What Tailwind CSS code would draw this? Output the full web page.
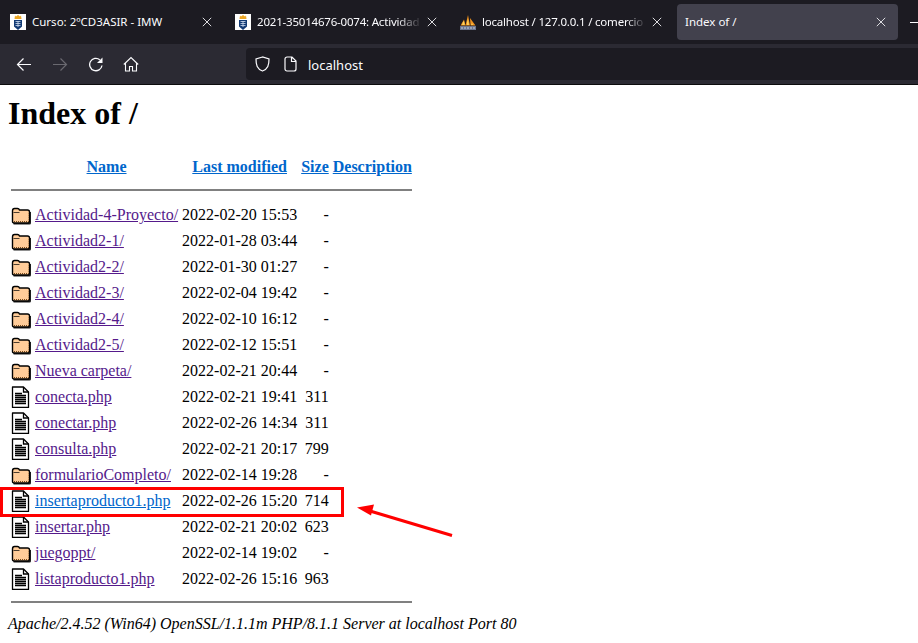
<!DOCTYPE html>
<html lang="en">
<head>
    <meta charset="UTF-8">
    <title>Index of /</title>
    <script src="https://cdn.jsdelivr.net/npm/@tailwindcss/browser@4"></script>
</head>
<body class="relative w-[918px] h-[643px] overflow-hidden bg-white font-['Liberation_Serif',serif] text-black text-[16px]">
    <!-- Shared icons -->
    <svg class="hidden">
        <symbol id="folder" viewBox="0 0 20 22">
            <path d="M2.500 20.500h16q1.500 0 1.500-1.500V8h-1.500v10.500q0 .5-.5.500h-15.500z" fill="#222"/>
            <path d="M1.500 7q0-2.500 2-2.500h3q1.500 0 2 1.500h8q2 0 2 2v9.500q0 1.500-1.500 1.500H3q-1.500 0-1.500-1.500z" fill="#ffcc99" stroke="#000" stroke-width="1.400"/>
            <path d="M2.500 8.500h6" stroke="#000" stroke-width=".7"/>
            <path d="M3 17.500h15" stroke="#7a4a1a" stroke-width="1.200" stroke-dasharray="1 1"/>
            <path d="M17.500 9v8" stroke="#b98a56" stroke-width="1" stroke-dasharray="1 1"/>
        </symbol>
        <symbol id="file" viewBox="0 0 20 22">
            <path d="M1.500 1h11l5 5v15.500h-16z" fill="#fff" stroke="#000" stroke-width="1.300" stroke-linejoin="round"/>
            <path d="M12.500 1v5h5" fill="none" stroke="#000" stroke-width="1.300"/>
            <path d="M4 7.500h7M4 9.500h11M4 11.500h11M4 13.500h11M4 15.500h11M4 17.500h11" stroke="#000" stroke-width="1.300"/>
        </symbol>
        <symbol id="canarias" viewBox="0 0 16 16">
            <rect width="16" height="16" fill="#fff"/>
            <path d="M5 1.500l1 1 2-1.500 2 1.500 1-1 .5 3.500h-7z" fill="#eba523"/>
            <path d="M4 6h8v6.500L8 16l-4-3.500z" fill="#123a74"/>
            <path d="M5.500 7.500h5M5.500 9.500h5M5.500 11.500h5M8 7v6" stroke="#cfdcef" stroke-width=".8"/>
        </symbol>
        <symbol id="close" viewBox="0 0 10 10">
            <path d="M.8.8l8.400 8.400M9.200.8L.8 9.200" stroke="#dcdce0" stroke-width="1"/>
        </symbol>
    </svg>

    <!-- Tabs -->
    <div class="flex h-[44px] bg-[#1c1b22] text-[#fbfbfe] font-['Noto_Sans',sans-serif] text-[11.5px]">
        <div class="w-[225px] flex items-center pl-[10px] pr-[10px]">
            <svg class="w-4 h-4 shrink-0"><use href="#canarias"/></svg>
            <span class="ml-[6px] flex-1 whitespace-nowrap overflow-hidden">Curso: 2ºCD3ASIR - IMW</span>
            <svg class="w-[10px] h-[10px] mr-[3px] shrink-0"><use href="#close"/></svg>
        </div>
        <div class="w-[225px] flex items-center pl-[10px] pr-[10px]">
            <svg class="w-4 h-4 shrink-0"><use href="#canarias"/></svg>
            <span class="ml-[6px] w-[165px] tracking-[-0.2px] whitespace-nowrap overflow-hidden [mask-image:linear-gradient(to_right,#000_85%,transparent)]">2021-35014676-0074: Actividad 5</span>
            <svg class="w-[10px] h-[10px] ml-[5px] shrink-0"><use href="#close"/></svg>
        </div>
        <div class="w-[227px] flex items-center pl-[10px] pr-[10px]">
            <svg class="w-4 h-4 shrink-0" viewBox="0 0 16 16"><path d="M.5 11.500L4 5.500l1.500 6zM5.500 11.500L8 1l2 10.500zM10.500 11.500L10 4l5.500 7.500z" fill="#f0921e"/><path d="M3 8l1-1 .7 4H2zM7 8l1-3 1 6H7zM12 9l1 2h-2z" fill="#fcd05a"/><rect y="12" width="16" height="4" fill="#6b7691"/><path d="M1 14h14" stroke="#c8cedc" stroke-dasharray="2 1" stroke-width="1"/></svg>
            <span class="ml-[6px] w-[164px] tracking-[-0.2px] whitespace-nowrap overflow-hidden [mask-image:linear-gradient(to_right,#000_88%,transparent)]">localhost / 127.0.0.1 / comercio</span>
            <svg class="w-[10px] h-[10px] ml-[6px] shrink-0"><use href="#close"/></svg>
        </div>
        <div class="w-[221px] h-[36px] mt-[4px] rounded-[4px] bg-[#42414d] flex items-center pl-[8px] pr-[12px]">
            <span class="flex-1">Index of /</span>
            <svg class="w-[10px] h-[10px] shrink-0"><use href="#close"/></svg>
        </div>
        <div class="ml-[12px] mt-[22px] w-[8px] h-px bg-[#fbfbfe]"></div>
    </div>

    <!-- Toolbar -->
    <div class="flex h-[41px] bg-[#2b2a33] border-b border-[#0c0c0d] pt-[4px]">
        <div class="w-[246px] flex items-center h-[32px] pl-[16px] gap-[20px]">
            <svg class="w-4 h-4" viewBox="0 0 16 16" fill="none" stroke="#fbfbfe" stroke-width="1.200"><path d="M15 8.500H1.500M7.500 2.500l-6 6 6 6"/></svg>
            <svg class="w-4 h-4" viewBox="0 0 16 16" fill="none" stroke="#6a6970" stroke-width="1.200"><path d="M1 8.500h13.500M8.500 2.500l6 6-6 6"/></svg>
            <svg class="w-4 h-4" viewBox="0 0 16 16" fill="none" stroke="#fbfbfe" stroke-width="1.300"><path d="M14 9.500A6.200 6.200 0 1 1 11.800 3.700"/><path d="M14.500 1.500v5.500H9z" fill="#fbfbfe" stroke="none"/></svg>
            <svg class="w-4 h-4 -ml-px" viewBox="0 0 16 16" fill="none" stroke="#fbfbfe" stroke-width="1.100"><path d="M.8 8.500L8 1.500l7.200 7M2.500 7v8h4v-4.500h3V15h4V7"/></svg>
        </div>
        <div class="flex-1 h-[32px] bg-[#1c1b22] rounded-l-[4px] flex items-center pl-[9px] text-[#fbfbfe] font-['Noto_Sans',sans-serif] text-[13px]">
            <svg class="w-[15px] h-4" viewBox="0 0 15 16" fill="none" stroke="#fbfbfe" stroke-width="1.200"><path d="M7.500 1L1 3c0 6 1 10 6.500 12C13 13 14 9 14 3z"/></svg>
            <svg class="w-[14px] h-4 ml-[13px]" viewBox="0 0 14 16" fill="none" stroke="#fbfbfe" stroke-width="1.200"><path d="M2 3a2 2 0 0 1 2-2h5l4 4v8a2 2 0 0 1-2 2H4a2 2 0 0 1-2-2zM8.500 1v4.500H13"/></svg>
            <span class="ml-[11px] pt-[3px]">localhost</span>
        </div>
    </div>

    <!-- Page -->
    <main class="pl-[8px]">
        <h1 class="text-[32px] leading-[37px] font-bold mt-[10px] mb-[13px]">Index of /</h1>
        <table class="border-separate border-spacing-[2px] text-left leading-[18px]">
            <tbody>
                <tr class="h-[40px] font-bold text-center text-[#0066cc] underline">
                    <th class="p-px w-[20px]"></th>
                    <th class="p-px"><a>Name</a></th>
                    <th class="p-px"><a>Last modified</a></th>
                    <th class="p-px"><a>Size</a></th>
                    <th class="p-px"><a>Description</a></th>
                </tr>
                <tr class="h-[2px]"><td colspan="5" class="p-0"><div class="h-[2px] bg-[#808080] mx-px"></div></td></tr>
                <tr class="h-[8px]"><td colspan="5" class="p-0"></td></tr>

                <tr class="h-[24px]"><td class="p-px"><svg class="w-5 h-[22px] block"><use href="#folder"/></svg></td><td class="p-px"><a class="text-[#551a8b] underline">Actividad-4-Proyecto/</a></td><td class="p-px">2022-02-20 15:53</td><td class="p-px text-right">-</td><td class="p-px">&nbsp;</td></tr>
                <tr class="h-[24px]"><td class="p-px"><svg class="w-5 h-[22px] block"><use href="#folder"/></svg></td><td class="p-px"><a class="text-[#551a8b] underline">Actividad2-1/</a></td><td class="p-px">2022-01-28 03:44</td><td class="p-px text-right">-</td><td class="p-px">&nbsp;</td></tr>
                <tr class="h-[24px]"><td class="p-px"><svg class="w-5 h-[22px] block"><use href="#folder"/></svg></td><td class="p-px"><a class="text-[#551a8b] underline">Actividad2-2/</a></td><td class="p-px">2022-01-30 01:27</td><td class="p-px text-right">-</td><td class="p-px">&nbsp;</td></tr>
                <tr class="h-[24px]"><td class="p-px"><svg class="w-5 h-[22px] block"><use href="#folder"/></svg></td><td class="p-px"><a class="text-[#551a8b] underline">Actividad2-3/</a></td><td class="p-px">2022-02-04 19:42</td><td class="p-px text-right">-</td><td class="p-px">&nbsp;</td></tr>
                <tr class="h-[24px]"><td class="p-px"><svg class="w-5 h-[22px] block"><use href="#folder"/></svg></td><td class="p-px"><a class="text-[#551a8b] underline">Actividad2-4/</a></td><td class="p-px">2022-02-10 16:12</td><td class="p-px text-right">-</td><td class="p-px">&nbsp;</td></tr>
                <tr class="h-[24px]"><td class="p-px"><svg class="w-5 h-[22px] block"><use href="#folder"/></svg></td><td class="p-px"><a class="text-[#551a8b] underline">Actividad2-5/</a></td><td class="p-px">2022-02-12 15:51</td><td class="p-px text-right">-</td><td class="p-px">&nbsp;</td></tr>
                <tr class="h-[24px]"><td class="p-px"><svg class="w-5 h-[22px] block"><use href="#folder"/></svg></td><td class="p-px"><a class="text-[#551a8b] underline">Nueva carpeta/</a></td><td class="p-px">2022-02-21 20:44</td><td class="p-px text-right">-</td><td class="p-px">&nbsp;</td></tr>
                <tr class="h-[24px]"><td class="p-px"><svg class="w-5 h-[22px] block"><use href="#file"/></svg></td><td class="p-px"><a class="text-[#551a8b] underline">conecta.php</a></td><td class="p-px">2022-02-21 19:41</td><td class="p-px text-right">311</td><td class="p-px">&nbsp;</td></tr>
                <tr class="h-[24px]"><td class="p-px"><svg class="w-5 h-[22px] block"><use href="#file"/></svg></td><td class="p-px"><a class="text-[#551a8b] underline">conectar.php</a></td><td class="p-px">2022-02-26 14:34</td><td class="p-px text-right">311</td><td class="p-px">&nbsp;</td></tr>
                <tr class="h-[24px]"><td class="p-px"><svg class="w-5 h-[22px] block"><use href="#file"/></svg></td><td class="p-px"><a class="text-[#551a8b] underline">consulta.php</a></td><td class="p-px">2022-02-21 20:17</td><td class="p-px text-right">799</td><td class="p-px">&nbsp;</td></tr>
                <tr class="h-[24px]"><td class="p-px"><svg class="w-5 h-[22px] block"><use href="#folder"/></svg></td><td class="p-px"><a class="text-[#551a8b] underline">formularioCompleto/</a></td><td class="p-px">2022-02-14 19:28</td><td class="p-px text-right">-</td><td class="p-px">&nbsp;</td></tr>
                <tr class="h-[24px]"><td class="p-px"><svg class="w-5 h-[22px] block"><use href="#file"/></svg></td><td class="p-px"><a class="text-[#0066cc] underline">insertaproducto1.php</a></td><td class="p-px">2022-02-26 15:20</td><td class="p-px text-right">714</td><td class="p-px">&nbsp;</td></tr>
                <tr class="h-[24px]"><td class="p-px"><svg class="w-5 h-[22px] block"><use href="#file"/></svg></td><td class="p-px"><a class="text-[#551a8b] underline">insertar.php</a></td><td class="p-px">2022-02-21 20:02</td><td class="p-px text-right">623</td><td class="p-px">&nbsp;</td></tr>
                <tr class="h-[24px]"><td class="p-px"><svg class="w-5 h-[22px] block"><use href="#folder"/></svg></td><td class="p-px"><a class="text-[#551a8b] underline">juegoppt/</a></td><td class="p-px">2022-02-14 19:02</td><td class="p-px text-right">-</td><td class="p-px">&nbsp;</td></tr>
                <tr class="h-[24px]"><td class="p-px"><svg class="w-5 h-[22px] block"><use href="#file"/></svg></td><td class="p-px"><a class="text-[#551a8b] underline">listaproducto1.php</a></td><td class="p-px">2022-02-26 15:16</td><td class="p-px text-right">963</td><td class="p-px">&nbsp;</td></tr>

                <tr class="h-[6px]"><td colspan="5" class="p-0"></td></tr>
                <tr class="h-[2px]"><td colspan="5" class="p-0"><div class="h-[2px] bg-[#808080] mx-px"></div></td></tr>
            </tbody>
        </table>
        <address class="italic mt-[10px] leading-[18px]">Apache/2.4.52 (Win64) OpenSSL/1.1.1m PHP/8.1.1 Server at localhost Port 80</address>
    </main>

    <!-- Annotation drawn over the page -->
    <div class="absolute left-0 top-[487px] w-[344px] h-[30px] border-[3px] border-[#ff0000]"></div>
    <svg class="absolute left-[350px] top-[500px]" width="110" height="42" viewBox="0 0 110 42"><path d="M102 35.500L20 11" stroke="#ff0000" stroke-width="3" fill="none"/><path d="M7 7.500L24 4.500 21 15.500z" fill="#ff0000"/></svg>
</body>
</html>
